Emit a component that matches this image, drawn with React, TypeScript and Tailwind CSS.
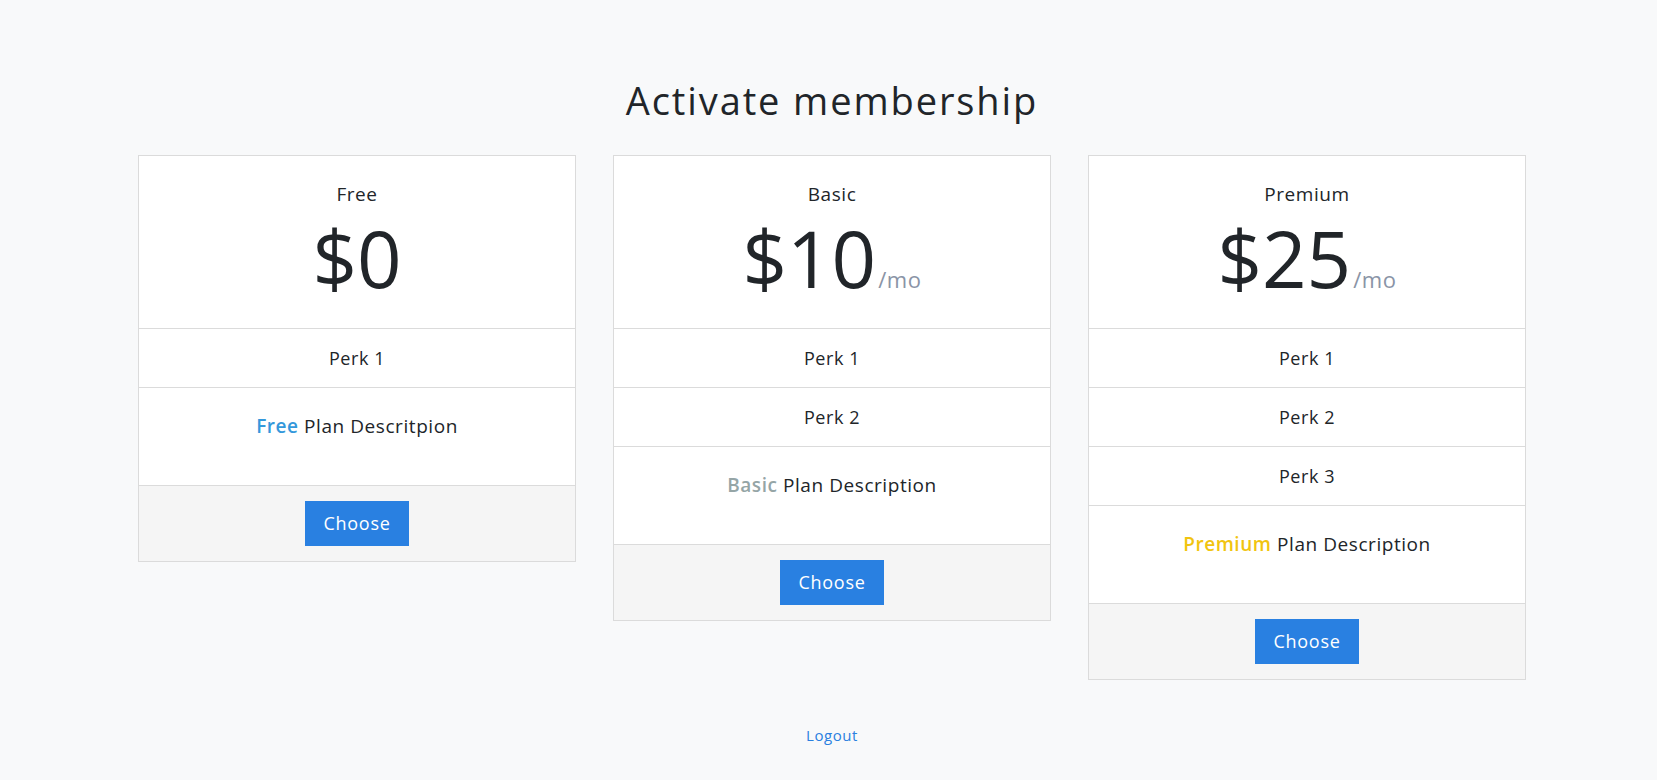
import React from "react";

type Plan = {
  name: string;
  price: string;
  monthly: boolean;
  perks: string[];
  highlight: string;
  highlightColor: string;
  description: string;
};

const plans: Plan[] = [
  {
    name: "Free",
    price: "$0",
    monthly: false,
    perks: ["Perk 1"],
    highlight: "Free",
    highlightColor: "text-[#3498db]",
    description: "Plan Descritpion",
  },
  {
    name: "Basic",
    price: "$10",
    monthly: true,
    perks: ["Perk 1", "Perk 2"],
    highlight: "Basic",
    highlightColor: "text-[#95a5a6]",
    description: "Plan Description",
  },
  {
    name: "Premium",
    price: "$25",
    monthly: true,
    perks: ["Perk 1", "Perk 2", "Perk 3"],
    highlight: "Premium",
    highlightColor: "text-[#f1c40f]",
    description: "Plan Description",
  },
];

function PlanCard({ plan }: { plan: Plan }) {
  return (
    <div className="w-[438px] border border-[#dbdbdb] bg-white text-center">
      {/* Header */}
      <div className="h-[172px] pt-[24px]">
        <div className="text-[19px] leading-[28px]">{plan.name}</div>
        <div className="mt-[2px] flex items-baseline justify-center">
          <span className="text-[78px] leading-[96px] tracking-normal">{plan.price}</span>
          {plan.monthly && (
            <span className="ml-[2px] text-[22px] text-[#8a94a6]">/mo</span>
          )}
        </div>
      </div>

      {/* Perks */}
      {plan.perks.map((perk) => (
        <div
          key={perk}
          className="flex h-[59px] items-center justify-center border-t border-[#dbdbdb] text-[18px]"
        >
          {perk}
        </div>
      ))}

      {/* Description */}
      <div className="h-[98px] border-t border-[#dbdbdb] pt-[24px] text-[19px] leading-[28px]">
        <span className={`font-semibold ${plan.highlightColor}`}>{plan.highlight}</span>{" "}
        {plan.description}
      </div>

      {/* Footer */}
      <div className="flex justify-center border-t border-[#dbdbdb] bg-[#f5f5f5] py-[15px]">
        <button className="h-[45px] w-[104px] bg-[#2980e1] text-[18px] tracking-[0.04em] text-white">
          Choose
        </button>
      </div>
    </div>
  );
}

export default function App() {
  return (
    <div className="min-h-screen bg-[#f8f9fa] pl-[7px] font-['Open_Sans',sans-serif] tracking-[0.035em] text-[#212529]">
      <div className="flex flex-col items-center pt-[74px]">
        <h1 className="text-[38px] leading-[52px] tracking-[0.05em]">Activate membership</h1>
        <div className="mt-[29px] flex items-start gap-[37px]">
          {plans.map((plan) => (
            <PlanCard key={plan.name} plan={plan} />
          ))}
        </div>
        <a href="#" className="mt-[44px] text-[15px] leading-[22px] text-[#2a80e0]">
          Logout
        </a>
      </div>
    </div>
  );
}
